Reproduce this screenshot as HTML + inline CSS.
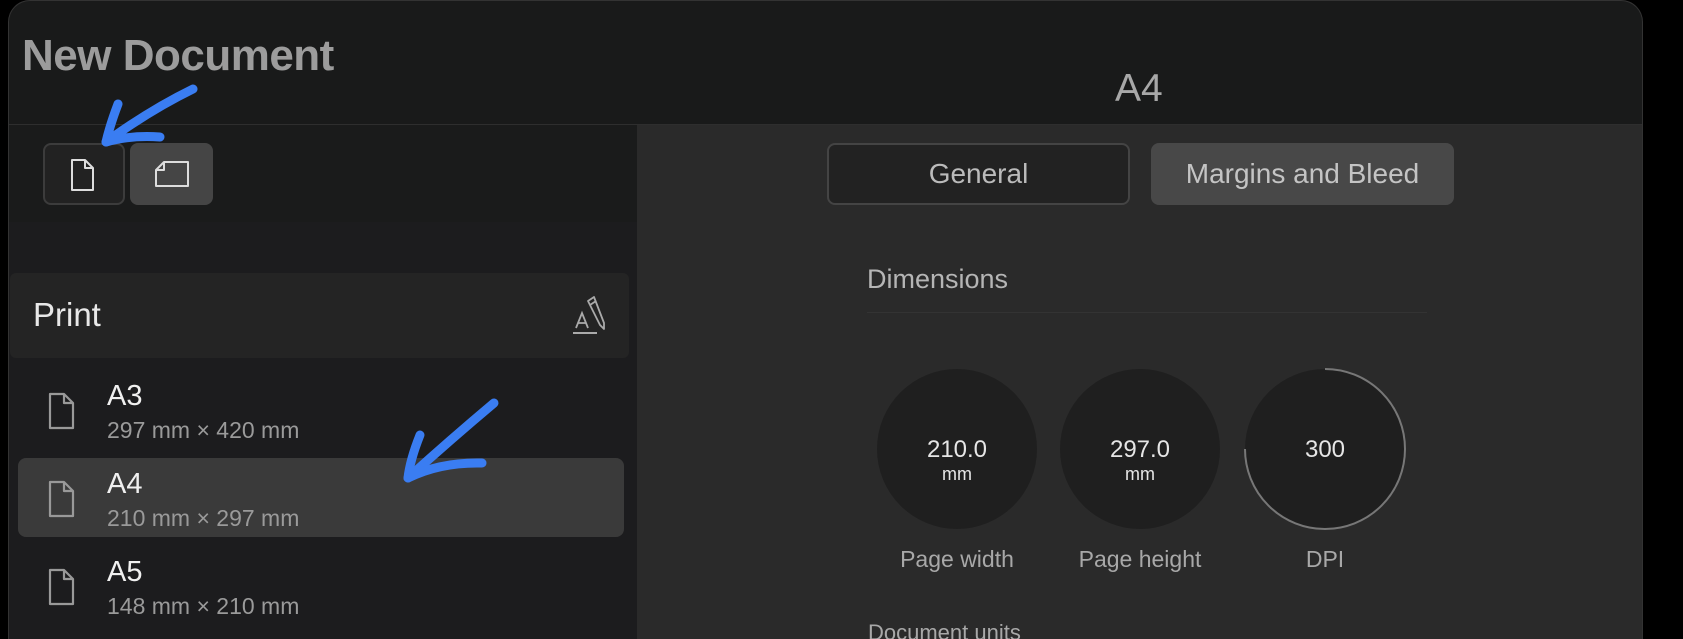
<!DOCTYPE html>
<html><head><meta charset="utf-8"><style>
*{margin:0;padding:0;box-sizing:border-box}
html,body{width:1683px;height:639px;overflow:hidden}
body{background:#000;position:relative;font-family:"Liberation Sans",sans-serif}
.abs{position:absolute}
.dlg{left:8px;top:0;width:1635px;height:639px;border-radius:22px 22px 0 0;background:#191a1a;border:1px solid #333;border-bottom:none;overflow:hidden}
.t{position:absolute;white-space:nowrap}
</style></head><body>
<div class="abs dlg"></div>
<div class="abs" style="left:9px;top:124px;width:1633px;height:1px;background:#2e2e2e"></div>
<div class="abs" style="left:9px;top:125px;width:628px;height:97px;background:#1a1b1b"></div>
<div class="abs" style="left:9px;top:222px;width:628px;height:417px;background:#1c1c1e"></div>
<div class="abs" style="left:637px;top:125px;width:1005px;height:514px;background:#2a2a2a"></div>

<div class="t" style="left:22px;top:31px;font-size:44px;font-weight:bold;color:#9c9c9c;letter-spacing:-0.5px">New Document</div>
<div class="t" style="left:1115px;top:67px;font-size:39px;color:#a8a8a8">A4</div>

<div class="abs" style="left:43px;top:143px;width:82px;height:62px;border:2px solid #3c3c3c;border-radius:8px;background:#222"></div>
<svg class="abs" style="left:70px;top:158px" width="26" height="34" viewBox="0 0 26 34"><path d="M2 2H15L23 10V32H2Z M15 2V10H23" fill="none" stroke="#ddd" stroke-width="2" stroke-linejoin="round"/></svg>
<div class="abs" style="left:130px;top:143px;width:83px;height:62px;border-radius:8px;background:#454545"></div>
<svg class="abs" style="left:154px;top:159px" width="36" height="30" viewBox="0 0 36 30"><path d="M2 27V11L10 3H34V27Z M2 11H10V3" fill="none" stroke="#ddd" stroke-width="2" stroke-linejoin="round"/></svg>

<div class="abs" style="left:10px;top:273px;width:619px;height:85px;background:#242424;border-radius:6px"></div>
<div class="t" style="left:33px;top:296px;font-size:33px;color:#e8e8e8">Print</div>
<svg class="abs" style="left:570px;top:295px" width="42" height="44" viewBox="0 0 42 44"><path d="M3 38H27" stroke="#aaa" stroke-width="2"/><path d="M6 33L12 18L18 33M8 28H16" fill="none" stroke="#aaa" stroke-width="1.8"/><path d="M18 6L24 2L34 28L34 34L30 30Z M20 10L26 6" fill="none" stroke="#aaa" stroke-width="1.8" stroke-linejoin="round"/></svg>

<div class="abs" style="left:18px;top:458px;width:606px;height:79px;background:#3a3a3a;border-radius:8px"></div>
<svg class="abs" style="left:47px;top:391px" width="30" height="40" viewBox="0 0 30 40"><path d="M3 3H17L26 12V37H3Z M17 3V12H26" fill="none" stroke="#999" stroke-width="2.2" stroke-linejoin="round"/></svg>
<svg class="abs" style="left:47px;top:479px" width="30" height="40" viewBox="0 0 30 40"><path d="M3 3H17L26 12V37H3Z M17 3V12H26" fill="none" stroke="#999" stroke-width="2.2" stroke-linejoin="round"/></svg>
<svg class="abs" style="left:47px;top:567px" width="30" height="40" viewBox="0 0 30 40"><path d="M3 3H17L26 12V37H3Z M17 3V12H26" fill="none" stroke="#999" stroke-width="2.2" stroke-linejoin="round"/></svg>
<div class="t" style="left:107px;top:380px;font-size:29px;color:#f0f0f0">A3</div>
<div class="t" style="left:107px;top:417px;font-size:23px;color:#9a9a9a">297 mm × 420 mm</div>
<div class="t" style="left:107px;top:468px;font-size:29px;color:#f0f0f0">A4</div>
<div class="t" style="left:107px;top:505px;font-size:23px;color:#9a9a9a">210 mm × 297 mm</div>
<div class="t" style="left:107px;top:556px;font-size:29px;color:#f0f0f0">A5</div>
<div class="t" style="left:107px;top:593px;font-size:23px;color:#9a9a9a">148 mm × 210 mm</div>

<div class="abs" style="left:827px;top:143px;width:303px;height:62px;border:2px solid #444;border-radius:8px;background:#222;color:#bbb;font-size:28px;text-align:center;line-height:58px">General</div>
<div class="abs" style="left:1151px;top:143px;width:303px;height:62px;border-radius:8px;background:#484848;color:#c4c4c4;font-size:28px;text-align:center;line-height:62px">Margins and Bleed</div>

<div class="t" style="left:867px;top:264px;font-size:27px;color:#b5b5b5">Dimensions</div>
<div class="abs" style="left:867px;top:312px;width:560px;height:1px;background:#333"></div>

<svg class="abs" style="left:860px;top:360px" width="560" height="180">
<circle cx="97" cy="89" r="80" fill="#1f1f1f"/>
<circle cx="280" cy="89" r="80" fill="#1f1f1f"/>
<circle cx="465" cy="89" r="80" fill="#1f1f1f"/>
<path d="M465 9A80 80 0 1 1 385 89" fill="none" stroke="#777" stroke-width="2"/>
</svg>
<div class="t" style="left:857px;top:436px;width:200px;text-align:center;font-size:24px;color:#e6e6e6">210.0</div>
<div class="t" style="left:857px;top:464px;width:200px;text-align:center;font-size:18px;color:#e6e6e6">mm</div>
<div class="t" style="left:1040px;top:436px;width:200px;text-align:center;font-size:24px;color:#e6e6e6">297.0</div>
<div class="t" style="left:1040px;top:464px;width:200px;text-align:center;font-size:18px;color:#e6e6e6">mm</div>
<div class="t" style="left:1225px;top:436px;width:200px;text-align:center;font-size:24px;color:#e6e6e6">300</div>
<div class="t" style="left:857px;top:546px;width:200px;text-align:center;font-size:23px;color:#a8a8a8">Page width</div>
<div class="t" style="left:1040px;top:546px;width:200px;text-align:center;font-size:23px;color:#a8a8a8">Page height</div>
<div class="t" style="left:1225px;top:546px;width:200px;text-align:center;font-size:23px;color:#a8a8a8">DPI</div>
<div class="t" style="left:868px;top:620px;height:19px;overflow:hidden;font-size:22px;line-height:26px;color:#a8a8a8">Document units</div>

<svg class="abs" style="left:0;top:0" width="1683" height="639">
<g fill="none" stroke="#3a7df2" stroke-width="9" stroke-linecap="round" stroke-linejoin="round">
<path d="M193 89Q150 110 106 142"/><path d="M118 104Q110 125 106 142Q130 135 160 137"/>
<path d="M494 403Q450 440 408 478"/><path d="M420 435Q410 460 408 478Q440 462 482 463"/>
</g></svg>
</body></html>
